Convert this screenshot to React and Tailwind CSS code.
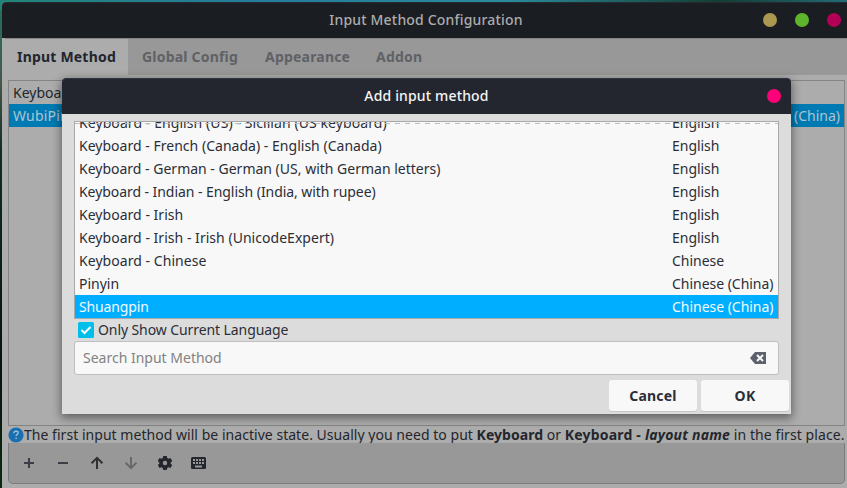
const METHODS = [
  ['Keyboard - English (US) - Sicilian (US keyboard)', 'English', 'tracking-[0.08px]'],
  ['Keyboard - French (Canada) - English (Canada)', 'English', 'tracking-[0.02px]'],
  ['Keyboard - German - German (US, with German letters)', 'English', ''],
  ['Keyboard - Indian - English (India, with rupee)', 'English', 'tracking-[-0.06px]'],
  ['Keyboard - Irish', 'English', 'tracking-[0.03px]'],
  ['Keyboard - Irish - Irish (UnicodeExpert)', 'English', 'tracking-[0.03px]'],
  ['Keyboard - Chinese', 'Chinese', 'tracking-[0.05px]'],
  ['Pinyin', 'Chinese (China)', ''],
  ['Shuangpin', 'Chinese (China)', 'tracking-[-0.15px]'],
];

function Toolbar() {
  return (
    <div className="ml-[6px] mr-[2px] flex h-[41px] shrink-0 items-center gap-[18px] rounded-b-[5px] border-x border-b border-[#7b7b7b] bg-[#989898] pl-[12px] text-[#3b3e47]">
      <svg className="size-4" viewBox="0 0 16 16"><path d="M3 8h10M8 3v10" stroke="currentColor" strokeWidth="2" /></svg>
      <svg className="size-4" viewBox="0 0 16 16"><path d="M3 8h10" stroke="currentColor" strokeWidth="2" /></svg>
      <svg className="size-4" viewBox="0 0 16 16" fill="none"><path d="M8 14V3M2.6 8.2 8 2.8l5.4 5.4" stroke="#303134" strokeWidth="2" /></svg>
      <svg className="size-4" viewBox="0 0 16 16" fill="none"><path d="M8 2v11M2.6 7.8 8 13.2l5.4-5.4" stroke="#67686a" strokeWidth="2" /></svg>
      <svg className="size-4" viewBox="0 0 16 16" fill="#24262d">
        <path fillRule="evenodd" d="M6.2 1h3.600l.4 2 1.300.8 2-.7 1.700 3-1.500 1.300v1.300l1.500 1.300-1.700 3-2-.7-1.300.8-.4 2H6.200l-.4-2-1.300-.8-2 .7-1.700-3 1.500-1.300V7.400L.8 6.100l1.700-3 2 .7L5.800 3zM8 5.800a2.200 2.200 0 1 0 0 4.400 2.200 2.200 0 0 0 0-4.400z" />
      </svg>
      <svg className="size-4" viewBox="0 0 16 16">
        <rect x="0" y="2" width="15" height="12" rx="1.500" fill="#24262d" />
        <path d="M2 5h2M5 5h2M8 5h2M11 5h2M2 8h2M5 8h2M8 8h2M11 8h2" stroke="#989898" strokeWidth="2" />
        <path d="M4 11.500h7" stroke="#989898" strokeWidth="2" />
      </svg>
    </div>
  );
}

function AddDialog() {
  return (
    <div className="absolute left-[62px] top-[78px] flex h-[336px] w-[729px] flex-col rounded-t-[4px] bg-[#dcdcdc] shadow-[0_3px_10px_1px_rgba(0,0,0,0.45)]">
      <div className="relative flex h-9 shrink-0 items-center justify-center rounded-t-[4px] border-t border-[#30343e] bg-[#23262f] pb-[2px] font-medium text-[#f4f4f4]">
        <span className="tracking-[0.15px]">Add input method</span>
        <span className="absolute right-[10px] top-[10px] size-[14px] rounded-full bg-[#ff0078]" />
      </div>
      <div className="relative mx-3 mt-[7px] flex h-[198px] shrink-0 flex-col justify-end overflow-hidden border border-[#a9a9a9] bg-[#f8f8f8] text-[#2b2e37]">
        {METHODS.map(([name, lang, tracking], i) => (
          <div key={name} className={i === 8 ? 'flex h-[23px] shrink-0 items-center bg-[#00aeff] pl-1 text-[#f5fbff]' : 'flex h-[23px] shrink-0 items-center pl-1'}>
            <span className={'w-[593px] shrink-0 ' + tracking}>{name}</span>
            <span className="tracking-[-0.03px]">{lang}</span>
          </div>
        ))}
        <div className="absolute inset-x-0 top-[1px] h-px bg-[repeating-linear-gradient(90deg,#bdbdbd_0_5px,transparent_5px_10px)]" />
      </div>
      <div className="ml-4 mt-[3px] flex h-4 shrink-0 items-center gap-1">
        <svg className="size-4" viewBox="0 0 16 16"><rect width="16" height="16" rx="1.500" fill="#00bfe8" /><path d="m3.500 8 3 3 6-6" fill="none" stroke="#fff" strokeWidth="2" /></svg>
        <span className="tracking-[-0.09px] text-[#2b2e37]">Only Show Current Language</span>
      </div>
      <div className="mx-3 mt-[3px] flex h-[34px] shrink-0 items-center justify-between rounded-[3px] border border-[#bfbfbf] bg-[#f8f8f8] pl-2 pr-[12px] text-[#828282]">
        <span>Search Input Method</span>
        <svg className="size-4" viewBox="0 0 16 16"><path d="M5 2h11v12H5L0 8z" fill="#5c616c" /><path d="m7 5 6 6m0-6-6 6" stroke="#f8f8f8" strokeWidth="2" /></svg>
      </div>
      <div className="mr-[2px] mt-[5px] flex justify-end gap-1 font-bold text-[#2b2e37]">
        <span className="flex h-[31px] w-[88px] items-center justify-center rounded-[3px] bg-[#f8f8f8] tracking-[0.2px] shadow-[0_1px_0_#c6c6c6]">Cancel</span>
        <span className="flex h-[31px] w-[88px] items-center justify-center rounded-[3px] bg-[#f8f8f8] tracking-[0.2px] shadow-[0_1px_0_#c6c6c6]">OK</span>
      </div>
    </div>
  );
}

export default function App() {
  return (
    <div className="relative h-[488px] w-[847px] overflow-hidden whitespace-nowrap bg-[linear-gradient(90deg,#218477,#247b9b_30%,#298b9b_60%,#143d32_85%,#226a76)] pl-[2px] pt-[2px] font-['Noto_Sans',sans-serif] text-[14px] leading-none">
      <div className="absolute bottom-0 left-0 top-[10px] w-[2px] bg-[linear-gradient(#26705a,#45584a_15%,#102d20_30%,#06140d_75%,#0b2a13)]" />
      <div className="relative flex h-[486px] flex-col rounded-tl-[4px] bg-[#acacac] text-[#24262b]">
        <div className="relative flex h-9 shrink-0 items-center justify-center rounded-tl-[4px] border-t border-[#262b32] bg-[#1a1d22] pb-[2px] pl-[3px] font-medium text-[#acacac]">
          <span className="tracking-[0.18px]">Input Method Configuration</span>
          <div className="absolute right-[6px] top-[10px] flex gap-[18px]">
            <span className="size-[14px] rounded-full bg-[#ab974f]" />
            <span className="size-[14px] rounded-full bg-[#5eb52b]" />
            <span className="size-[14px] rounded-full bg-[#b30056]" />
          </div>
        </div>
        <div className="ml-[3px] flex h-[37px] shrink-0 items-center border-t border-[#848484] bg-[#989898] font-bold tracking-[0.2px] text-[#606166]">
          <span className="flex h-full w-[123px] items-center bg-[#acacac] pl-3 text-[#22252d]">Input Method</span>
          <span className="w-[123px] pl-[14px]">Global Config</span>
          <span className="w-[111px] pl-[14px]">Appearance</span>
          <span className="pl-[14px]">Addon</span>
        </div>
        <div className="ml-[6px] mr-[2px] mt-[5px] h-[346px] shrink-0 border border-[#848484]">
          <div className="flex h-[23px] items-center pl-1">Keyboard - English (US)</div>
          <div className="flex h-[23px] items-center justify-between bg-[#007ab3] pl-1 pr-1 text-[#adc4d1]">
            <span className="tracking-[0.2px]">WubiPinyin</span>
            <span>Chinese (China)</span>
          </div>
        </div>
        <div className="ml-[6px] flex h-[17px] shrink-0 items-center">
          <svg className="size-4 shrink-0" viewBox="0 0 16 16"><circle cx="8" cy="8" r="7.600" fill="#1a6fb3" /><path d="M5.900 6.200c0-1.300.9-2 2.100-2s2.100.7 2.100 1.800c0 1.500-2 1.500-2 3.100M8.100 10.500v1.400" fill="none" stroke="#b5cadb" strokeWidth="1.200" /></svg>
          <span className="tracking-[0.035px]">The first input method will be inactive state. Usually you need to put <b>Keyboard</b> or <b className="tracking-[0.2px]">Keyboard - <i>layout name</i></b><span className="tracking-[0.08px]"> in the first place.</span></span>
        </div>
        <Toolbar />
      </div>
      <AddDialog />
    </div>
  );
}
